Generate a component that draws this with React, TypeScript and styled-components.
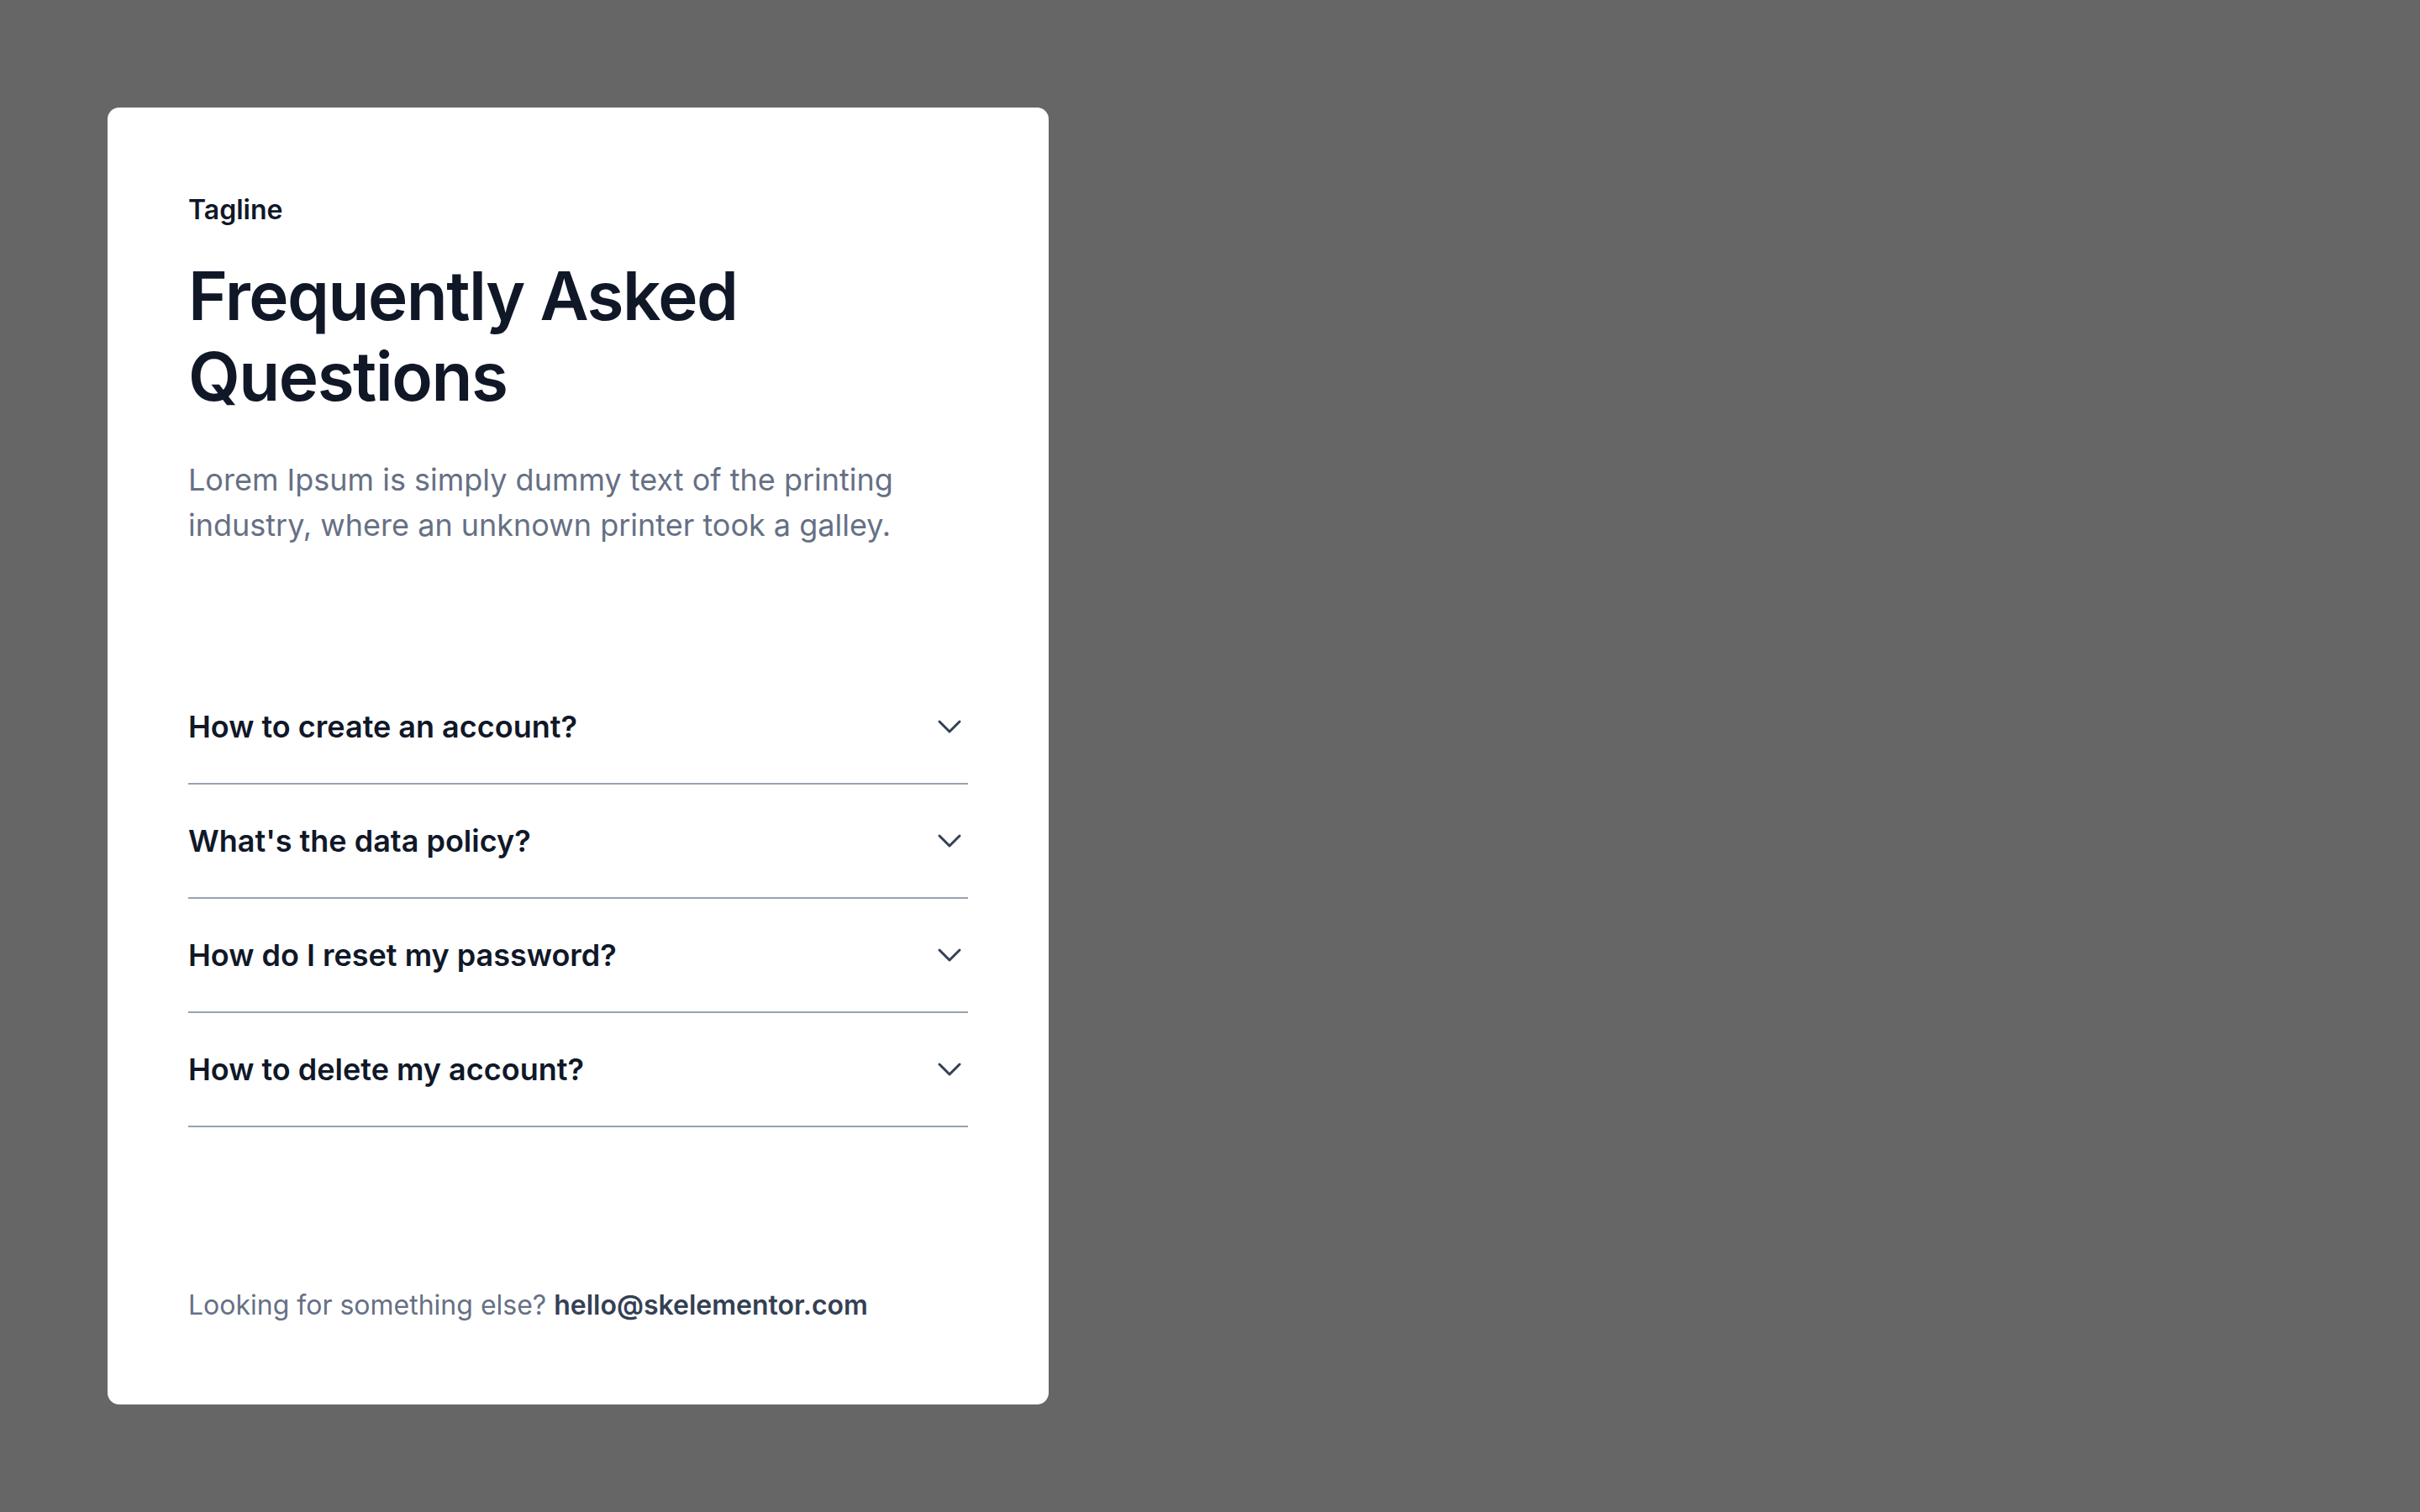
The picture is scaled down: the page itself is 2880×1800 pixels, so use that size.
import React from "react";
import styled, {createGlobalStyle} from "styled-components";
import {ChevronDown} from "lucide-react";

const GlobalStyle = createGlobalStyle`
  html, body {
    margin: 0;
    padding: 0;
    background: #666666;
  }
  body {
    font-family: Inter, "Noto Sans", "Liberation Sans", sans-serif;
  }
`

const Page = styled.div`
  min-height: 1800px;
  padding: 128px;
  box-sizing: border-box;
`

const Card = styled.section`
  display: flex;
  flex-direction: column;
  width: 1120px;
  height: 1544px;
  box-sizing: border-box;
  padding: 96px;
  background: #ffffff;
  border-radius: 14px;
`

const Tagline = styled.span`
  margin-top: 2px;
  color: #101828;
  font-size: 32px;
  line-height: 48px;
  font-weight: 600;
`

const Title = styled.h1`
  margin: 30px 0 0;
  color: #101828;
  font-size: 80px;
  line-height: 96px;
  font-weight: 600;
  letter-spacing: -1.5px;
`

const Lead = styled.p`
  margin: 48px 0 0;
  color: #667085;
  font-size: 36px;
  line-height: 54px;
  font-weight: 400;
`

const List = styled.div`
  display: flex;
  flex-direction: column;
  margin-top: 146px;
`

const Item = styled.button`
  display: flex;
  align-items: center;
  justify-content: space-between;
  width: 100%;
  height: 136px;
  padding: 0;
  box-sizing: border-box;
  border: none;
  border-bottom: 2px solid #98a2b3;
  background: transparent;
  font-family: inherit;
  text-align: left;
  cursor: pointer;
`

const Question = styled.span`
  color: #101828;
  font-size: 36px;
  line-height: 44px;
  font-weight: 600;
`

const Chevron = styled(ChevronDown)`
  width: 48px;
  height: 48px;
  margin-right: -2px;
  flex-shrink: 0;
  color: #344054;
`

const Footer = styled.p`
  margin: auto 0 -2px;
  color: #667085;
  font-size: 32px;
  line-height: 48px;
`

const Email = styled.a`
  color: #344054;
  font-weight: 600;
  text-decoration: none;
`

const questions = [
    "How to create an account?",
    "What's the data policy?",
    "How do I reset my password?",
    "How to delete my account?",
]

const App = () => {
    return (
        <Page>
            <GlobalStyle/>
            <Card>
                <Tagline>Tagline</Tagline>
                <Title>Frequently Asked<br/>Questions</Title>
                <Lead>
                    Lorem Ipsum is simply dummy text of the printing industry, where an unknown printer took a galley.
                </Lead>
                <List>
                    {questions.map(q => (
                        <Item key={q}>
                            <Question>{q}</Question>
                            <Chevron strokeWidth={1.5}/>
                        </Item>
                    ))}
                </List>
                <Footer>
                    Looking for something else? <Email href="mailto:hello@skelementor.com">hello@skelementor.com</Email>
                </Footer>
            </Card>
        </Page>
    );
}

export default App;
